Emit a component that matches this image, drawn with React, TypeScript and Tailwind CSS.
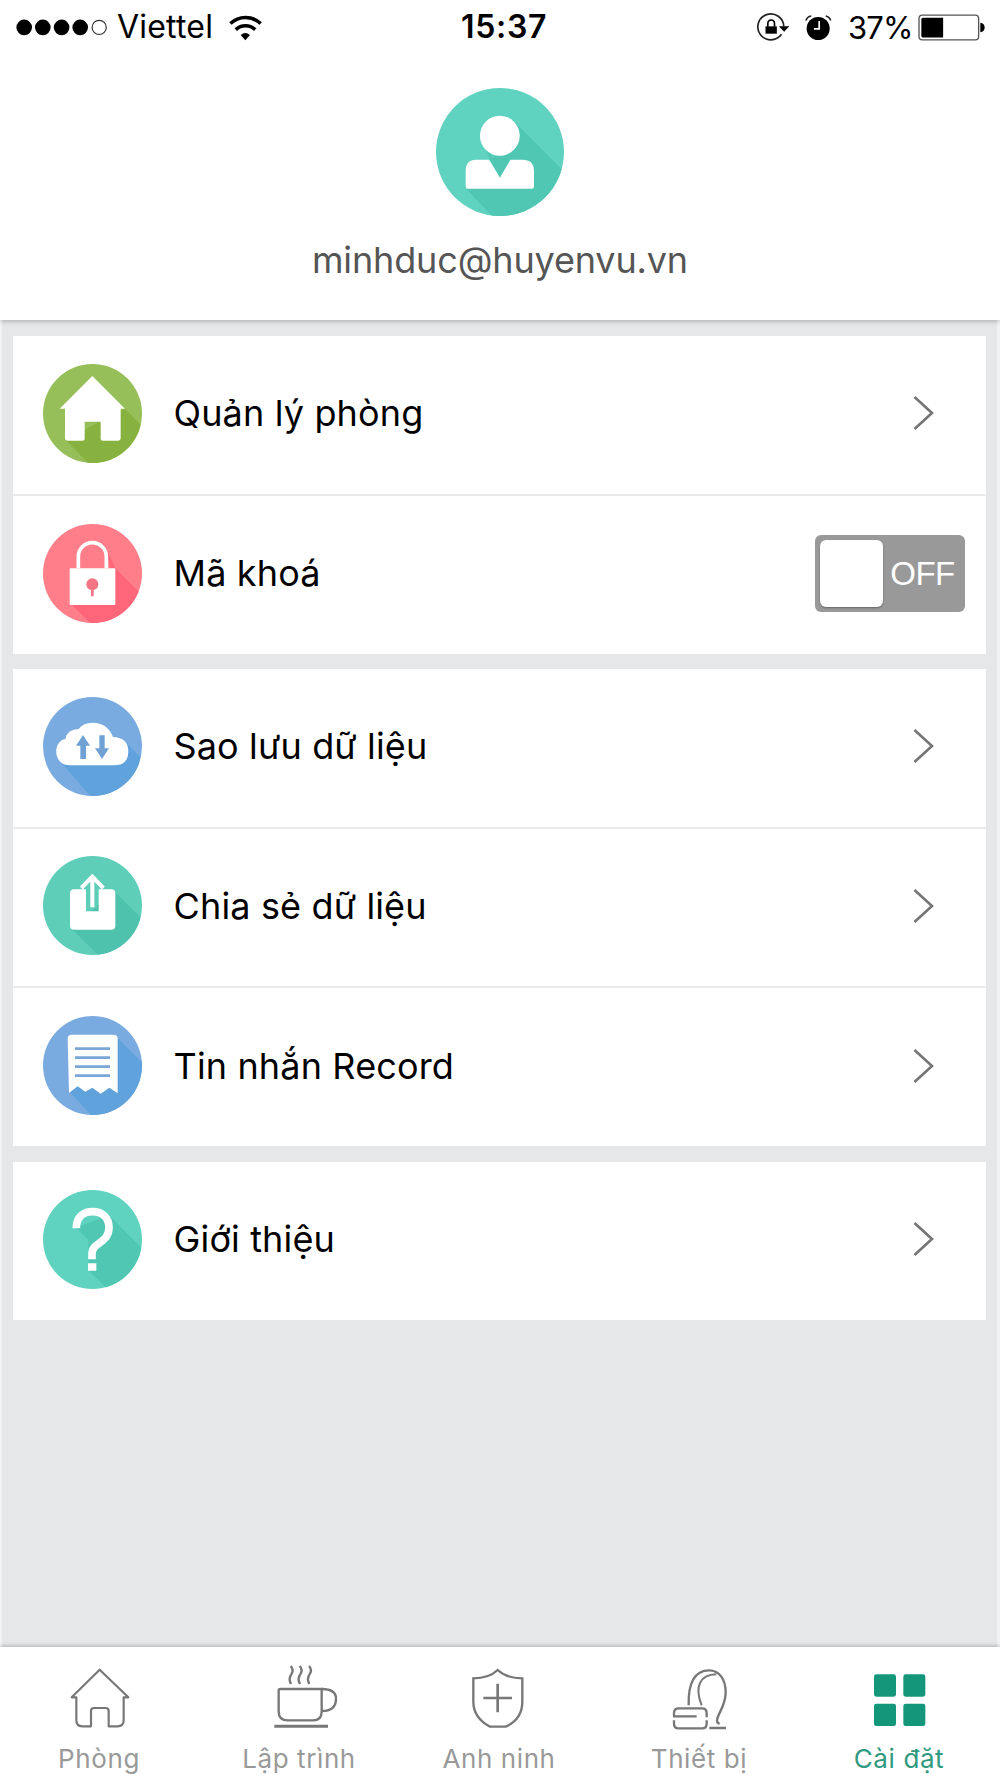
import { useState } from 'react';
import type { ReactNode } from 'react';

const RoomIcon = () => (
  <svg viewBox="127 130 297 297" className="h-[99px] w-[99px] rounded-full bg-[#96bf59]">
    <path d="M372 264l-7-7 120 120v120H330L194 357z" fill="#87b23f" />
    <path
      d="M275 166l98 98h-13v89q0 7-7 7h-47q-6 0-6-6v-51h-48v51q0 6-6 6h-46q-7 0-7-7v-89h-16z"
      fill="#fff"
    />
  </svg>
);

const LockIcon = () => (
  <svg viewBox="127 609 297 297" className="h-[99px] w-[99px] rounded-full bg-[#ff7e89]">
    <path d="M318 684l26 58 120 120v80H304l-92-92 116-108z" fill="#ff667a" />
    <path d="M237 742v-35a38 38 0 0 1 76 0v35z" fill="#ff7e89" />
    <path d="M233 742v-35a42 42 0 0 1 84 0v35" fill="none" stroke="#fff" strokeWidth="11" />
    <rect x="207" y="742" width="137" height="110" rx="3" fill="#fff" />
    <circle cx="275" cy="790" r="18" fill="#f47684" />
    <path d="M271 802h8v24h-8z" fill="#f47684" />
  </svg>
);

const BackupIcon = () => (
  <svg viewBox="127 139 297 297" className="h-[99px] w-[99px] rounded-full bg-[#7aabe0]">
    <path d="M375 275l80 80v120H304L180 335z" fill="#60a2db" />
    <path
      d="M208 344c-52 0-53-72-14-79q6-30 40-30q14-19 42-19q44 0 61 43q46 2 46 43q0 42-42 42z"
      fill="#fff"
    />
    <path
      d="M247 253l21 32h-12v40h-17v-40h-13zM296 254h16v39h13l-21 32l-21-32h13z"
      fill="#6fa1d5"
    />
  </svg>
);

const ShareIcon = () => (
  <svg viewBox="127 619 297 297" className="h-[99px] w-[99px] rounded-full bg-[#5fceb9]">
    <path d="M342 725l110 110v110H322L210 835z" fill="#4fc2ad" />
    <path
      d="M220 719h36v66h38v-66h38q12 0 12 12v97q0 12-12 12H220q-12 0-12-12v-97q0-12 12-12z"
      fill="#fff"
    />
    <path d="M262 719h26v56h-26z" fill="#5fceb9" />
    <path d="M275 773v-84M242 715l33-34 33 34" fill="none" stroke="#fff" strokeWidth="12" />
  </svg>
);

const RecordIcon = () => (
  <svg viewBox="127 109 297 297" className="h-[99px] w-[99px] rounded-full bg-[#7aabe0]">
    <path d="M344 168l110 110v140H282L206 336z" fill="#60a2db" />
    <path
      d="M213 165h126q12 0 12 12v164l-25-17-26 18-25-18-21 12-23-16-26 20-4-163q0-12 12-12z"
      fill="#fff"
    />
    <path d="M223 207h105M223 234h105M223 261h105M223 288h105" stroke="#7ba6d8" strokeWidth="8" />
  </svg>
);

const AboutIcon = () => (
  <svg viewBox="127 629 297 297" className="h-[99px] w-[99px] rounded-full bg-[#60d3c0]">
    <path d="M324 704l130 130v120H348L263 870v-92l-38-36z" fill="#4fc7b3" />
    <path
      d="M227 744c0-34 20-50 49-50s49 19 49 47c0 50-51 42-51 80v16"
      fill="none"
      stroke="#fff"
      strokeWidth="23"
    />
    <path d="M262 849h25v22h-25z" fill="#fff" />
  </svg>
);

const Avatar = () => (
  <svg viewBox="437 51 385 386" className="h-32 w-32 rounded-full bg-[#60d3c0]">
    <path d="M672 152l180 180v140H638L527 354l80-90z" fill="#4fc7b3" />
    <path d="M590 240l58 58-18 24-32-54z" fill="#4fc7b3" />
    <path d="M527 268h72l31 54-10-10-30-40z" fill="#60d3c0" />
    <circle cx="629" cy="195" r="60" fill="#fff" />
    <path
      d="M558 267h39l32 55 32-55h36q35 0 35 34v47q0 7-7 7H532q-6 0-6-7v-47q0-34 32-34z"
      fill="#fff"
    />
  </svg>
);

const Chevron = () => (
  <svg viewBox="0 0 24 38" className="mr-[51px] h-[38px] w-6" fill="none" stroke="#747474" strokeWidth="2.6">
    <path d="M3.5 3l17.5 16-17.5 16" />
  </svg>
);

function StatusBar() {
  return (
    <div className="flex h-[58px] items-center pr-[15px] pb-1 pl-4 text-black">
      <div className="flex w-[445px] items-center">
        <svg viewBox="0 0 94 18" className="h-[18px] w-[94px]">
          <circle cx="8.2" cy="9.4" r="7.8" />
          <circle cx="26.8" cy="9.4" r="7.8" />
          <circle cx="45.6" cy="9.4" r="7.8" />
          <circle cx="64.2" cy="9.4" r="7.8" />
          <circle cx="83.2" cy="9.4" r="7.1" fill="none" stroke="#333" strokeWidth="1.2" />
        </svg>
        <span className="ml-[7px] w-24 text-[32px] leading-none tracking-[0.2px] whitespace-nowrap">Viettel</span>
        <svg viewBox="643 40 91 76" className="ml-[16px] h-[27px] w-[33px]" fill="none" stroke="#000">
          <path d="M646 67a61 61 0 0 1 85 0" strokeWidth="10" />
          <path d="M661 84a40 40 0 0 1 55 0" strokeWidth="10" />
          <path d="M675 99q13-11 26 0l-13 15z" fill="#000" stroke="none" />
        </svg>
      </div>
      <span className="text-[32px] leading-none font-semibold tracking-[0.7px]">15:37</span>
      <div className="ml-auto flex items-center">
        <svg viewBox="110 34 98 90" className="h-[30px] w-[33px]">
          <path d="M186 101a39 39 0 1 1 7-23" fill="none" stroke="#222" strokeWidth="5" />
          <path d="M178 77h31l-15 16z" />
          <path d="M138 77h34v22h-34z" />
          <path d="M145 78V69q0-11 10-11t10 11v9" fill="none" stroke="#000" strokeWidth="5" />
        </svg>
        <svg viewBox="256 38 82 82" className="ml-[16px] h-[27px] w-[27px]">
          <circle cx="296" cy="82" r="35" />
          <path d="M259 58q3-12 16-14M319 44q12 3 15 14" fill="none" stroke="#222" strokeWidth="5" />
          <path d="M299 59v24h-16" fill="none" stroke="#fff" strokeWidth="5" />
        </svg>
        <span className="ml-[16px] w-[63px] text-[31px] leading-none tracking-[-0.8px] whitespace-nowrap">37%</span>
        <svg viewBox="597 41 200 80" className="ml-[7px] h-[27px] w-[67px]">
          <rect x="600" y="44" width="178" height="74" rx="10" fill="#fff" stroke="#555" strokeWidth="4" />
          <path d="M612 52h60v59h-60q-5 0-5-5V57q0-5 5-5z" />
          <path d="M783 67q13 2 13 14t-13 14z" />
        </svg>
      </div>
    </div>
  );
}

function Toggle() {
  const [on, setOn] = useState(false);

  return (
    <button
      type="button"
      onClick={() => setOn(!on)}
      className={`mr-[21px] flex h-[77px] w-[150px] items-center rounded-[6px] bg-[#999] px-[5px] ${on ? 'flex-row-reverse' : ''}`}
    >
      <span className="h-[67px] w-[63px] rounded-[6px] bg-white shadow-[0_1px_2px_rgba(0,0,0,0.35)]" />
      <span className="flex-1 pl-0.5 text-center font-['Liberation_Sans',sans-serif] text-[33px] leading-none tracking-[-0.5px] text-white">
        {on ? 'ON' : 'OFF'}
      </span>
    </button>
  );
}

type Item = { label: string; icon: ReactNode; toggle?: boolean };

const groups: Item[][] = [
  [
    { label: 'Quản lý phòng', icon: <RoomIcon /> },
    { label: 'Mã khoá', icon: <LockIcon />, toggle: true },
  ],
  [
    { label: 'Sao lưu dữ liệu', icon: <BackupIcon /> },
    { label: 'Chia sẻ dữ liệu', icon: <ShareIcon /> },
    { label: 'Tin nhắn Record', icon: <RecordIcon /> },
  ],
  [{ label: 'Giới thiệu', icon: <AboutIcon /> }],
];

// Tab icons share a 200x94 cell, drawn in a 600x282 box.
const tabs = [
  {
    label: 'Phòng',
    icon: (
      <svg viewBox="0 50 600 282" className="h-[94px] w-[200px]" fill="none" stroke="#777" strokeWidth="6.5" strokeLinejoin="round">
        <path d="M299 118l-84 83h14v69q0 18 18 18h26v-46q0-9 9-9h35q9 0 9 9v46h26q19 0 19-18v-69h14z" />
      </svg>
    ),
  },
  {
    label: 'Lập trình',
    icon: (
      <svg viewBox="600 50 600 282" className="h-[94px] w-[200px]" fill="none" stroke="#777" strokeWidth="7">
        <path d="M841 176h124v68q0 26-26 26h-76q-27 0-27-26v-63q0-5 5-5z" />
        <path d="M965 176q43 0 43 29 0 37-43 37" />
        <path d="M823 288h161" strokeWidth="9" />
        <path d="M872 107q10 11 3 23-11 15-2 31M899 107q10 11 3 23-11 15-2 31M927 107q10 11 3 23-11 15-2 31" />
      </svg>
    ),
  },
  {
    label: 'Anh ninh',
    icon: (
      <svg viewBox="0 50 600 282" className="h-[94px] w-[200px]" fill="none" stroke="#777" strokeWidth="7">
        <path d="M293 119q27 25 74 25v70q0 52-50 75h-47q-50-27-50-75v-70q47 0 73-25z" />
        <path d="M250 203h86M293 160v86" strokeWidth="8" />
      </svg>
    ),
  },
  {
    label: 'Thiết bị',
    icon: (
      <svg viewBox="600 50 600 282" className="h-[94px] w-[200px]" fill="none" stroke="#777" strokeWidth="7">
        <path d="M866 225c-2-67 18-105 61-105 32 0 50 28 50 66 0 44-26 64-26 86q1 7 8 8" />
        <path d="M905 225c-24-60-2-92 44-93" strokeWidth="6" />
        <path d="M822 261v-13q0-14 14-14h70q14 0 14 14v13M822 270v10q0 14 14 14h70q14 0 14-14v-10" />
        <path d="M822 258h68M928 293h50" />
      </svg>
    ),
  },
  {
    label: 'Cài đặt',
    active: true,
    icon: (
      <svg viewBox="180 50 600 282" className="h-[94px] w-[200px]" fill="#14967b">
        <rect x="402" y="132" width="66" height="67" rx="7" />
        <rect x="490" y="132" width="66" height="67" rx="7" />
        <rect x="402" y="220" width="66" height="67" rx="7" />
        <rect x="490" y="220" width="66" height="67" rx="7" />
      </svg>
    ),
  },
];

export default function App() {
  return (
    <div className="flex h-[1778px] w-[1000px] flex-col overflow-hidden bg-white font-['Inter',sans-serif]">
      <header className="relative z-10 h-[320px] shrink-0 bg-white shadow-[0_1px_5px_rgba(0,0,0,0.28)]">
        <StatusBar />
        <div className="flex flex-col items-center pt-[30px]">
          <Avatar />
          <p className="mt-[23px] text-[36px] leading-[42px] tracking-[-0.15px] text-[#555]">minhduc@huyenvu.vn</p>
        </div>
      </header>

      <main className="flex flex-1 flex-col gap-[15.5px] border-r-[3px] border-l-2 border-[#f1f2f3] bg-[#e6e7e9] pt-4 pr-[11px] pl-[11px]">
        {groups.map((items) => (
          <section key={items[0].label} className="divide-y-2 divide-[#e9eaeb] bg-white">
            {items.map((item) => (
              <div key={item.label} className="flex h-[159.5px] items-center pb-[3px] pl-[29.5px] last:h-[158px]">
                {item.icon}
                <span className="ml-8 flex-1 text-[36px] leading-none tracking-[0.15px] text-black">
                  {item.label}
                </span>
                {item.toggle ? <Toggle /> : <Chevron />}
              </div>
            ))}
          </section>
        ))}
      </main>

      <nav className="relative z-10 flex h-[131px] shrink-0 bg-white shadow-[0_-1px_4px_rgba(0,0,0,0.25)]">
        {tabs.map((tab) => (
          <div key={tab.label} className="flex w-[200px] flex-col items-center">
            {tab.icon}
            <span
              className={`mt-0.5 pr-0.5 text-[26px] leading-8 tracking-[0.6px] whitespace-nowrap ${tab.active ? 'text-[#2f9a80]' : 'text-[#999]'}`}
            >
              {tab.label}
            </span>
          </div>
        ))}
      </nav>
    </div>
  );
}
